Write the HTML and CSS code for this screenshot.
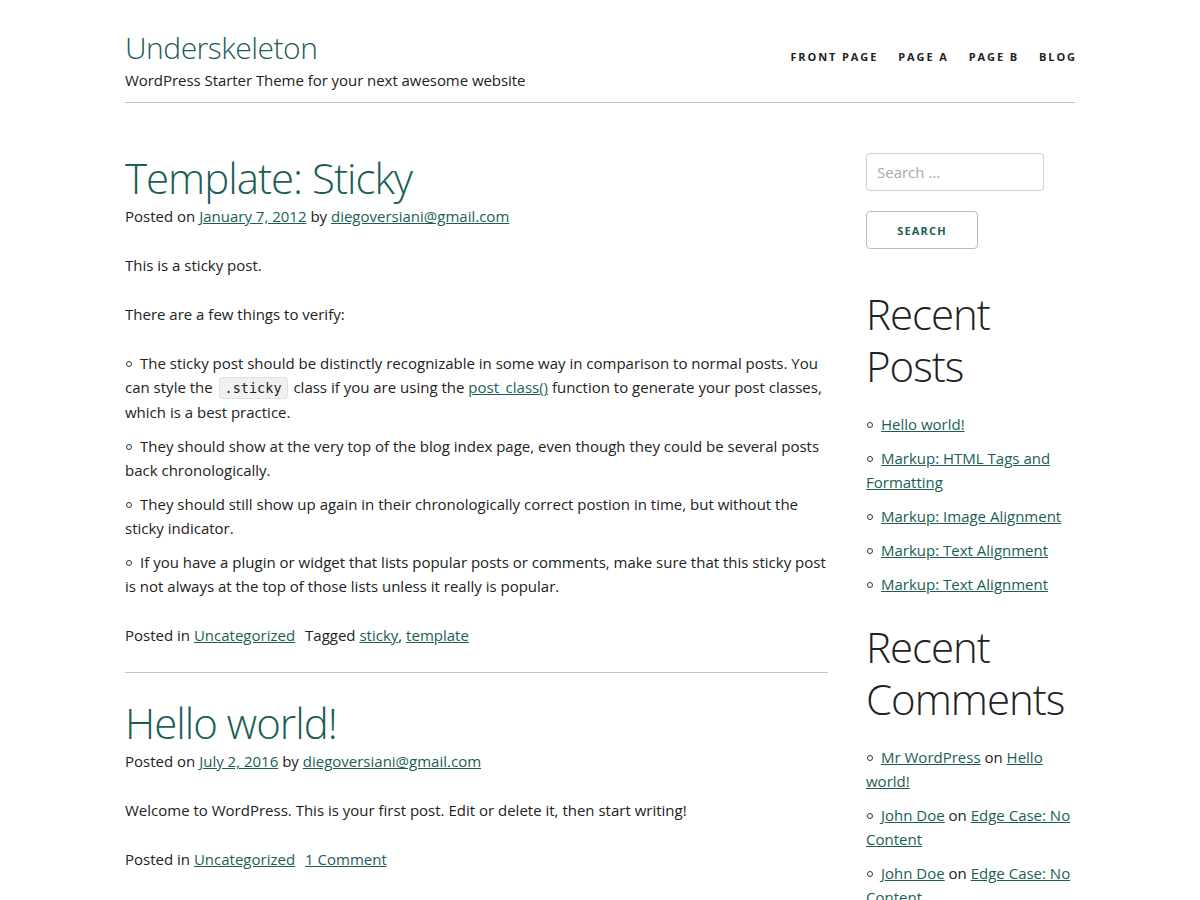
FILE: index.html
```html
<!DOCTYPE html>
<html lang="en">
<head>
<meta charset="utf-8">
<title>Underskeleton</title>
<link rel="stylesheet" href="styles.css">
</head>
<body>
<div class="container">
  <header class="site-header">
    <div class="branding">
      <p class="site-title"><a href="#">Underskeleton</a></p>
      <p class="site-description">WordPress Starter Theme for your next awesome website</p>
    </div>
    <nav class="main-nav">
      <ul>
        <li><a href="#">Front Page</a></li>
        <li><a href="#">Page A</a></li>
        <li><a href="#">Page B</a></li>
        <li><a href="#">Blog</a></li>
      </ul>
    </nav>
  </header>

  <div class="site-content">
    <main class="content-area">
      <article class="post">
        <h1 class="entry-title">Template: Sticky</h1>
        <div class="entry-meta">Posted on <a href="#">January 7, 2012</a> by <a href="#">diegoversiani@gmail.com</a></div>
        <div class="entry-content">
          <p>This is a sticky post.</p>
          <p>There are a few things to verify:</p>
          <ul>
            <li>The sticky post should be distinctly recognizable in some way in comparison to normal posts. You can style the <code>.sticky</code> class if you are using the <a href="#">post_class()</a> function to generate your post classes, which is a best practice.</li>
            <li>They should show at the very top of the blog index page, even though they could be several posts back chronologically.</li>
            <li>They should still show up again in their chronologically correct postion in time, but without the sticky indicator.</li>
            <li>If you have a plugin or widget that lists popular posts or comments, make sure that this sticky post is not always at the top of those lists unless it really is popular.</li>
          </ul>
        </div>
        <footer class="entry-footer"><span class="cat-links">Posted in <a href="#">Uncategorized</a></span><span class="tags-links">Tagged <a href="#">sticky</a>, <a href="#">template</a></span></footer>
      </article>
      <hr class="post-sep">
      <article class="post">
        <h1 class="entry-title">Hello world!</h1>
        <div class="entry-meta">Posted on <a href="#">July 2, 2016</a> by <a href="#">diegoversiani@gmail.com</a></div>
        <div class="entry-content">
          <p>Welcome to WordPress. This is your first post. Edit or delete it, then start writing!</p>
        </div>
        <footer class="entry-footer"><span class="cat-links">Posted in <a href="#">Uncategorized</a></span><span class="comments-link"><a href="#">1 Comment</a></span></footer>
      </article>
    </main>

    <aside class="sidebar">
      <form class="search-form">
        <input class="search-field" type="search" placeholder="Search …">
        <button class="search-submit" type="button">Search</button>
      </form>
      <section class="widget">
        <h2 class="widget-title">Recent Posts</h2>
        <ul>
          <li><a href="#">Hello world!</a></li>
          <li><a href="#">Markup: HTML Tags and Formatting</a></li>
          <li><a href="#">Markup: Image Alignment</a></li>
          <li><a href="#">Markup: Text Alignment</a></li>
          <li><a href="#">Markup: Text Alignment</a></li>
        </ul>
      </section>
      <section class="widget">
        <h2 class="widget-title">Recent Comments</h2>
        <ul>
          <li><a href="#">Mr WordPress</a> on <a href="#">Hello world!</a></li>
          <li><a href="#">John Doe</a> on <a href="#">Edge Case: No Content</a></li>
          <li><a href="#">John Doe</a> on <a href="#">Edge Case: No Content</a></li>
        </ul>
      </section>
    </aside>
  </div>
</div>
</body>
</html>
```

FILE: styles.css
```css
html, body {
  margin: 0;
  padding: 0;
  background: #fff;
}
body {
  font-family: "Open Sans", "Liberation Sans", sans-serif;
  font-size: 15px;
  line-height: 24px;
  color: #222;
}
a {
  color: #1b5e56;
}
.container {
  width: 950px;
  margin: 0 auto;
}

/* header */
.site-header {
  display: flex;
  justify-content: space-between;
  align-items: flex-start;
  padding-top: 28px;
  padding-bottom: 10px;
  border-bottom: 1px solid #c4c4c4;
}
.site-title {
  margin: 0;
  font-size: 30px;
  line-height: 40px;
  font-weight: 300;
  letter-spacing: -0.5px;
}
.site-title a {
  color: #1b5e56;
  text-decoration: none;
}
.site-description {
  margin: 0;
  font-size: 15px;
  line-height: 24px;
  letter-spacing: -0.05px;
}
.main-nav ul {
  display: flex;
  gap: 20px;
  list-style: none;
  margin: 15px -2px 0 0;
  padding: 0;
}
.main-nav a {
  font-size: 11px;
  font-weight: 700;
  letter-spacing: 1.9px;
  text-transform: uppercase;
  color: #222;
  text-decoration: none;
}

/* layout */
.site-content {
  display: flex;
  gap: 38px;
  padding-top: 49px;
}
.content-area {
  width: 703px;
  flex: none;
}
.sidebar {
  width: 209px;
  flex: none;
  padding-top: 1px;
}

/* posts */
.entry-title {
  margin: 0;
  font-size: 42px;
  line-height: 52px;
  font-weight: 300;
  letter-spacing: -1px;
  color: #1b5e56;
}
.entry-meta {
  margin-bottom: 25px;
}
.entry-content p {
  margin: 0 0 25px;
}
.entry-content ul,
.widget ul {
  list-style: none;
  margin: 0 0 25px;
  padding: 0;
}
.entry-content li,
.widget li {
  margin-bottom: 10px;
}
.entry-content li::before,
.widget li::before {
  content: "";
  display: inline-block;
  box-sizing: border-box;
  width: 6px;
  height: 6px;
  border: 1px solid #333;
  border-radius: 50%;
  margin: 0 8px 0 1px;
  vertical-align: 2px;
}
code {
  font-family: "DejaVu Sans Mono", "Liberation Mono", monospace;
  font-size: 13.5px;
  padding: 2px 5px;
  margin: 0 2px;
  background: #f1f1f1;
  border: 1px solid #e1e1e1;
  border-radius: 4px;
}
.entry-footer {
  margin-bottom: 25px;
}
.cat-links {
  margin-right: 10px;
}
.post-sep {
  border: 0;
  border-top: 1px solid #c4c4c4;
  margin: 0 0 24px;
  height: 0;
}

/* sidebar */
.search-form {
  margin-bottom: 39px;
}
.search-field {
  display: block;
  box-sizing: border-box;
  width: 178px;
  height: 38px;
  padding: 6px 10px;
  margin: 0 0 20px;
  border: 1px solid #d1d1d1;
  border-radius: 4px;
  font-family: inherit;
  font-size: 15px;
  color: #222;
  background: #fff;
}
.search-field::placeholder {
  color: #a8a8a8;
}
.search-submit {
  display: block;
  box-sizing: border-box;
  width: 112px;
  height: 38px;
  padding: 0;
  border: 1px solid #bbb;
  border-radius: 4px;
  background: transparent;
  font-family: inherit;
  font-size: 11px;
  font-weight: 700;
  letter-spacing: 1.2px;
  text-transform: uppercase;
  color: #1b5e56;
}
.widget-title {
  margin: 0 0 20px;
  font-size: 42px;
  line-height: 52px;
  font-weight: 300;
  letter-spacing: -1px;
  color: #222;
}
```
